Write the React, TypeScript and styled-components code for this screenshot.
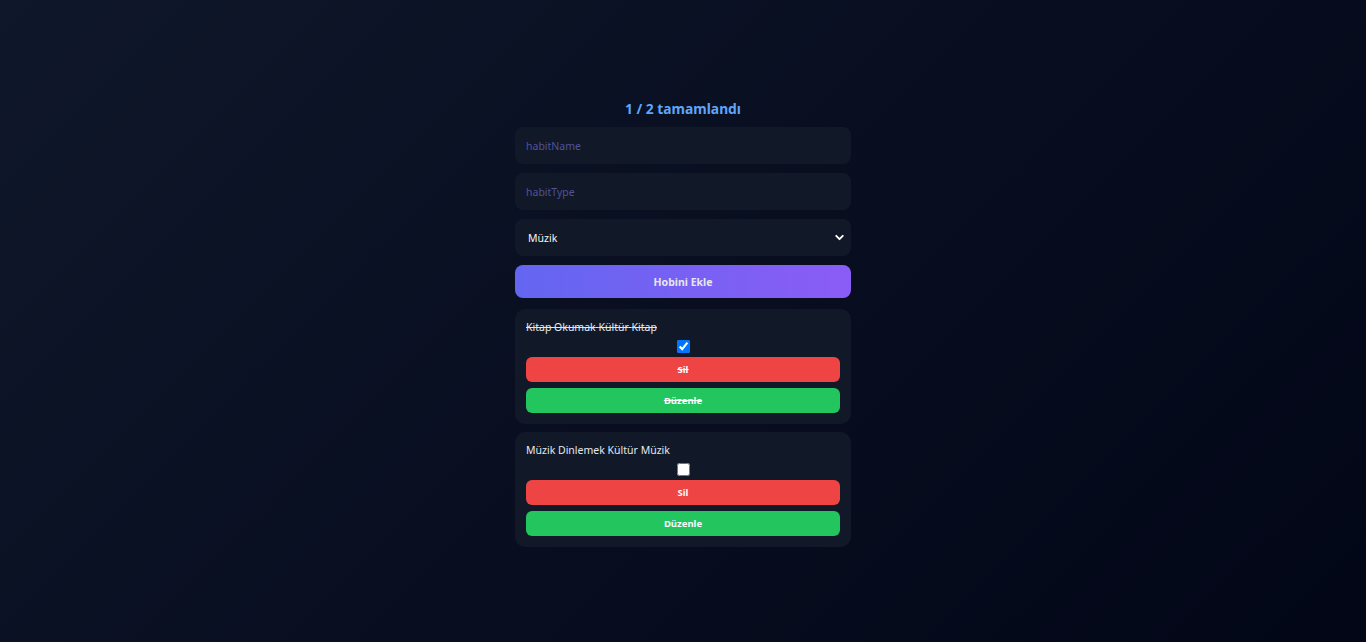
import React, { useState } from "react";
import styled, { createGlobalStyle } from "styled-components";
import { ChevronDown } from "lucide-react";

const GlobalStyle = createGlobalStyle`
  html, body { margin: 0; padding: 0; }
  body {
    min-height: 100vh;
    background: linear-gradient(135deg, #0f172a 0%, #020617 100%);
    font-family: "Noto Sans", "Open Sans", sans-serif;
    color: #e5e7eb;
  }
  #root { min-height: 642px; }
`;

const Page = styled.div`
  display: flex;
  justify-content: center;
  padding-top: 100px;
  min-height: 642px;
  box-sizing: border-box;
`;

const Column = styled.div`
  width: 336px;
  display: flex;
  flex-direction: column;
`;

const Title = styled.h2`
  margin: 0 0 9px;
  text-align: center;
  font-size: 13.8px;
  line-height: 18px;
  font-weight: 700;
  color: #60a5fa;
`;

const Field = styled.input`
  box-sizing: border-box;
  height: 37px;
  margin-bottom: 9px;
  padding: 0 11px;
  border: none;
  border-radius: 8px;
  background: #111827;
  color: #e5e7eb;
  font-family: inherit;
  font-size: 10.5px;
  outline: none;
  &::placeholder { color: #50529a; }
`;

const SelectWrap = styled.div`
  position: relative;
  margin-bottom: 9px;
`;

const Select = styled.select`
  appearance: none;
  width: 100%;
  box-sizing: border-box;
  height: 37px;
  padding: 0 13px;
  border: none;
  border-radius: 8px;
  background: #111827;
  color: #f1f5f9;
  font-family: inherit;
  font-size: 10.5px;
  outline: none;
`;

const Chevron = styled(ChevronDown)`
  position: absolute;
  right: 5px;
  top: 12px;
  pointer-events: none;
  color: #ffffff;
`;

const AddButton = styled.button`
  height: 33px;
  margin-bottom: 11px;
  border: none;
  border-radius: 8px;
  background: linear-gradient(90deg, #6366f1 0%, #8b5cf6 100%);
  color: #e5e7eb;
  font-family: inherit;
  font-size: 10.5px;
  font-weight: 700;
  cursor: pointer;
`;

const Card = styled.div<{ $done: boolean }>`
  display: flex;
  flex-direction: column;
  margin-bottom: 8px;
  padding: 11px;
  border-radius: 10px;
  background: #111827;
  text-decoration: ${(p) => (p.$done ? "line-through" : "none")};
`;

const HabitText = styled.span`
  font-size: 10.5px;
  line-height: 15px;
  color: #e2e8f0;
`;

const Check = styled.input`
  width: 13px;
  height: 13px;
  margin: 5px auto 4px;
`;

const ActionButton = styled.button<{ $tone: "red" | "green"; $done: boolean }>`
  height: 25px;
  margin-top: ${(p) => (p.$tone === "green" ? "6px" : "0")};
  border: none;
  border-radius: 6px;
  background: ${(p) => (p.$tone === "red" ? "#ef4444" : "#22c55e")};
  color: #f8fafc;
  font-family: inherit;
  font-size: 9.5px;
  font-weight: 700;
  text-decoration: ${(p) => (p.$done ? "line-through" : "none")};
  cursor: pointer;
`;

type Habit = { id: number; name: string; type: string; cat: string; done: boolean };

export default function App() {
  const [habits, setHabits] = useState<Habit[]>([
    { id: 1, name: "Kitap Okumak", type: "Kültür", cat: "Kitap", done: true },
    { id: 2, name: "Müzik Dinlemek", type: "Kültür", cat: "Müzik", done: false },
  ]);
  const doneCount = habits.filter((h) => h.done).length;

  return (
    <>
      <GlobalStyle />
      <Page>
        <Column>
          <Title>
            {doneCount} / {habits.length} tamamlandı
          </Title>
          <Field placeholder="habitName" />
          <Field placeholder="habitType" />
          <SelectWrap>
            <Select defaultValue="Müzik">
              <option>Kitap</option>
              <option>Müzik</option>
              <option>Spor</option>
            </Select>
            <Chevron size={13} strokeWidth={3.5} />
          </SelectWrap>
          <AddButton>Hobini Ekle</AddButton>
          {habits.map((h) => (
            <Card key={h.id} $done={h.done}>
              <HabitText>
                {h.name} {h.type} {h.cat}
              </HabitText>
              <Check
                type="checkbox"
                checked={h.done}
                onChange={() =>
                  setHabits((hs) => hs.map((x) => (x.id === h.id ? { ...x, done: !x.done } : x)))
                }
              />
              <ActionButton $tone="red" $done={h.done}>Sil</ActionButton>
              <ActionButton $tone="green" $done={h.done}>Düzenle</ActionButton>
            </Card>
          ))}
        </Column>
      </Page>
    </>
  );
}
